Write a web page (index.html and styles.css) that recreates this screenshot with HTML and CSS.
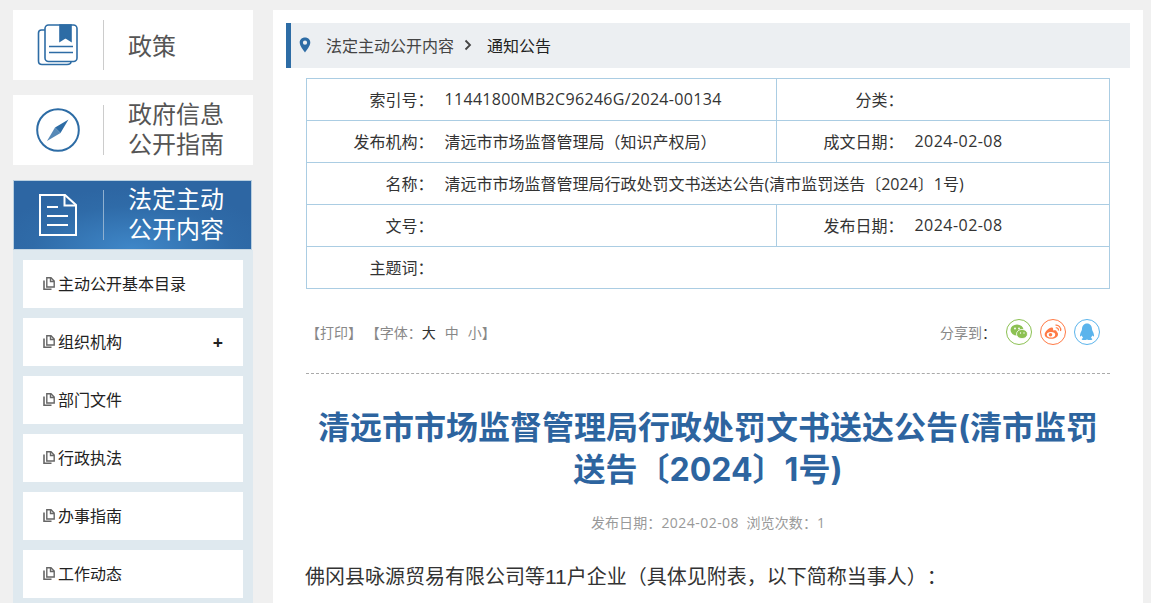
FILE: index.html
```html
<!DOCTYPE html>
<html lang="zh-CN">
<head>
<meta charset="utf-8">
<title>通知公告</title>
<link rel="stylesheet" href="styles.css">
</head>
<body>
<div class="page">
  <aside class="side">
    <a class="card">
      <span class="card-icon">
        <svg width="42" height="42" viewBox="0 0 42 42" fill="none" stroke="#2d6ca5" stroke-width="1.600"><path d="M8 6H4.500Q1.500 6 1.500 9V37Q1.500 40.500 5 40.500H30Q34 40.500 34 37.500"/><rect x="8" y="1" width="32" height="36.500" rx="3.500"/><path d="M23 1H34V17L28.500 13.500L23 17Z" fill="#2d6ca5"/><path d="M12 22.500H36M12 28.500H36" stroke-width="1.500"/></svg>
      </span>
      <span class="card-text one">政策</span>
    </a>
    <a class="card">
      <span class="card-icon">
        <svg width="44" height="44" viewBox="0 0 44 44" fill="none"><circle cx="22" cy="22" r="20.800" stroke="#2d6ca5" stroke-width="2"/><path d="M32.500 11.500L24.500 25L19 19.500Z" fill="#2d6ca5"/><path d="M11 33L19 19.500L24.500 25Z" fill="#2d6ca5" opacity=".8"/></svg>
      </span>
      <span class="card-text">政府信息<br>公开指南</span>
    </a>
    <a class="card active">
      <span class="card-icon">
        <svg class="active-doc" width="38" height="42" viewBox="0 0 38 42" fill="none" stroke="#fff" stroke-width="2"><path d="M1 1H26L37 11V41H1Z"/><path d="M25.500 1.500V11.500H37" stroke-width="2"/><path d="M8 13H19M8 22H29M8 31H29" stroke-width="2.200"/></svg>
      </span>
      <span class="card-text">法定主动<br>公开内容</span>
    </a>
    <nav class="menu">
      <a class="menu-item"><svg class="doc" viewBox="0 0 12 13" width="12" height="13"><use href="#doc"/></svg>主动公开基本目录</a>
      <a class="menu-item"><svg class="doc" viewBox="0 0 12 13" width="12" height="13"><use href="#doc"/></svg>组织机构<b class="plus">+</b></a>
      <a class="menu-item"><svg class="doc" viewBox="0 0 12 13" width="12" height="13"><use href="#doc"/></svg>部门文件</a>
      <a class="menu-item"><svg class="doc" viewBox="0 0 12 13" width="12" height="13"><use href="#doc"/></svg>行政执法</a>
      <a class="menu-item"><svg class="doc" viewBox="0 0 12 13" width="12" height="13"><use href="#doc"/></svg>办事指南</a>
      <a class="menu-item"><svg class="doc" viewBox="0 0 12 13" width="12" height="13"><use href="#doc"/></svg>工作动态</a>
    </nav>
  </aside>
  <main class="main">
    <div class="crumb">
      <svg class="pin" width="12" height="16" viewBox="0 0 12 16"><path fill="#2d6ca5" fill-rule="evenodd" d="M6 0.500C2.800 0.500 0.700 2.800 0.700 5.600C0.700 9 4.500 13.500 6 15.500C7.500 13.500 11.300 9 11.300 5.600C11.300 2.800 9.200 0.500 6 0.500ZM6 3.600A2.100 2.100 0 1 1 6 7.800A2.100 2.100 0 1 1 6 3.600Z"/></svg>
      <span class="crumb-a">法定主动公开内容</span>
      <svg class="chev" width="8" height="12" viewBox="0 0 8 12" fill="none" stroke="#444" stroke-width="1.800"><path d="M1.500 1.500L6 6L1.500 10.500"/></svg>
      <span class="crumb-b">通知公告</span>
    </div>
    <div class="body">
      <table class="meta">
        <colgroup><col class="c1"><col class="c2"><col class="c3"><col class="c4"></colgroup>
        <tr><th>索引号：</th><td><span class="id">11441800MB2C96246G/2024-00134</span></td><th>分类：</th><td></td></tr>
        <tr><th>发布机构：</th><td>清远市市场监督管理局（知识产权局）</td><th>成文日期：</th><td><span class="num">2024-02-08</span></td></tr>
        <tr><th>名称：</th><td colspan="3">清远市市场监督管理局行政处罚文书送达公告(清市监罚送告〔2024〕1号)</td></tr>
        <tr><th>文号：</th><td></td><th>发布日期：</th><td><span class="num">2024-02-08</span></td></tr>
        <tr><th>主题词：</th><td colspan="3"></td></tr>
      </table>
      <div class="tools">
        <div class="tools-left">【打印】 【字体：<span class="big">大</span><span class="sz">中</span><span class="sz">小</span>】</div>
        <div class="share">
          <span class="share-label">分享到<span class="colon">：</span></span>
          <span class="ring wx">
            <svg width="18" height="16" viewBox="0 0 18 16"><ellipse cx="7" cy="6" rx="6.500" ry="5.500" fill="#8cc152"/><ellipse cx="12" cy="10" rx="5.500" ry="4.600" fill="#8cc152" stroke="#fff" stroke-width=".8"/><circle cx="5" cy="4.500" r=".9" fill="#fff"/><circle cx="9" cy="4.500" r=".9" fill="#fff"/><circle cx="10.500" cy="9" r=".7" fill="#fff"/><circle cx="14" cy="9" r=".7" fill="#fff"/></svg>
          </span>
          <span class="ring wb">
            <svg width="18" height="16" viewBox="0 0 18 16" fill="none"><path d="M7.500 14.800C3.500 14.800 0.700 13 0.700 10.500C0.700 7.500 5 3.500 7.500 3.500C9.500 3.500 9.300 5.500 9 6.500C11 5.800 13 6.300 12.800 8C13.800 8.500 14 9.500 14 10.500C14 12.800 11 14.800 7.500 14.800Z" fill="#ff7a45"/><ellipse cx="7" cy="10.800" rx="4.200" ry="2.800" fill="#fff"/><circle cx="6.500" cy="10.800" r="1.800" fill="#ff7a45"/><path d="M11.500 1.200C14.500 0.800 17.500 3.500 16.500 7M11.800 3.800C13.500 3.500 14.800 4.800 14.300 6.500" stroke="#ff7a45" stroke-width="1.200"/></svg>
          </span>
          <span class="ring qq">
            <svg width="16" height="18" viewBox="0 0 16 18"><path fill="#5bb4ec" d="M8 0.500C4.800 0.500 3 3 3 6C3 7.500 2 8.500 1.500 10C0.800 12 0.800 13.500 1.500 13.500C2 13.500 2.500 12.800 2.800 12.300C3 13.500 3.500 14.300 4.200 15C3.200 15.300 2.500 15.800 2.800 16.500C3.300 17.300 6.500 17.300 8 16.500C9.500 17.300 12.700 17.300 13.200 16.500C13.500 15.800 12.800 15.300 11.800 15C12.500 14.300 13 13.500 13.200 12.300C13.500 12.800 14 13.500 14.500 13.500C15.200 13.500 15.200 12 14.500 10C14 8.500 13 7.500 13 6C13 3 11.200 0.500 8 0.500Z"/></svg>
          </span>
        </div>
      </div>
      <h1 class="title">清远市市场监督管理局行政处罚文书送达公告(清市监罚送告〔2024〕1号)</h1>
      <div class="info">发布日期：<span class="num">2024-02-08</span>&nbsp;&nbsp;浏览次数：1</div>
      <p class="para">佛冈县咏源贸易有限公司等<span class="pnum">11</span>户企业（具体见附表，以下简称当事人）：</p>
    </div>
  </main>
</div>
<svg class="defs" width="0" height="0"><defs><symbol id="doc" viewBox="0 0 12 13"><path d="M3.800 0.800H8L11.200 4V10H3.800Z M7.500 1V4.500H11" fill="none" stroke="#666" stroke-width="1.400"/><path d="M1 3.500V12.200H8.500" fill="none" stroke="#666" stroke-width="1.600"/></symbol></defs></svg>
</body>
</html>
```
FILE: styles.css
```css
* { box-sizing: border-box; }
html, body { margin: 0; height: 603px; overflow: hidden; }
body { background: #f0f0f0; font-family: "Open Sans", "Noto Sans CJK SC", sans-serif; color: #333; text-spacing-trim: space-all; }
.defs { position: absolute; }
.page { display: flex; align-items: flex-start; gap: 20px; padding: 10px 8px 0 13px; }
.side { width: 240px; flex: none; display: flex; flex-direction: column; }
.card { height: 70px; background: #fff; display: flex; align-items: center; margin-bottom: 15px; }
.card-icon { width: 91px; height: 50px; border-right: 1px solid #ccc; display: flex; align-items: center; justify-content: center; flex: none; }
.card-text { padding-left: 24px; padding-bottom: 2px; font-size: 24px; line-height: 30px; color: #555; }
.card-text.one { padding-bottom: 0; padding-top: 2px; }
.active-doc { margin-right: 2px; }
.card.active { background: radial-gradient(ellipse 60% 90% at 50% 100%, #3f87c8 0%, #2f6ba8 70%, #2d66a3 100%); border: 1px solid #b9cfe0; border-bottom-color: #c5d6e3; margin: 0; width: 239px; }
.card.active .card-icon { border-right-color: #8fb0d0; width: 90px; }
.card.active .card-text { color: #fff; }
.menu { background: #dfe9ef; padding: 10px 10px 20px; display: flex; flex-direction: column; gap: 10px; }
.menu-item { height: 48px; background: #fff; display: flex; align-items: center; padding-left: 20px; padding-bottom: 2px; font-size: 16px; color: #222; position: relative; }
.doc { margin-right: 3px; flex: none; margin-top: 1px; }
.plus { position: absolute; right: 20px; top: 11px; font-size: 18px; line-height: 26px; font-weight: 700; color: #222; }
.main { width: 870px; flex: none; height: 593px; background: #fff; padding: 13px 13px 0; }
.crumb { height: 45px; background: #eceff2; border-left: 5px solid #2d6ca5; display: flex; align-items: center; padding-left: 8px; padding-bottom: 2px; font-size: 16px; }
.pin { flex: none; margin-right: 15px; margin-top: 1px; }
.crumb-a { color: #444; }
.chev { margin: 0 15px 0 10px; flex: none; margin-top: 1px; }
.crumb-b { color: #222; }
.body { padding: 10px 20px 0; }
.meta { width: 804px; border-collapse: collapse; table-layout: fixed; font-size: 16px; color: #333; }
.c1 { width: 128px; }
.c2 { width: 342px; }
.c3 { width: 128px; }
.meta th, .meta td { height: 42px; border-top: 1px solid #abcde3; border-bottom: 1px solid #abcde3; padding: 0 0 2px; font-weight: 400; text-align: left; white-space: nowrap; }
.meta th { text-align: right; padding-right: 1px; border-left: 1px solid #abcde3; }
.meta td { padding-left: 10px; }
.meta td:last-child { border-right: 1px solid #abcde3; }
.num { letter-spacing: .46px; }
.id { letter-spacing: .32px; }
.tools { height: 85px; display: flex; justify-content: space-between; align-items: flex-start; border-bottom: 1px dashed #aaa; padding-top: 28px; }
.tools-left { font-size: 14px; color: #888; line-height: 32px; }
.big { color: #333; margin-right: 9px; }
.sz { margin-right: 9px; }
.sz + .sz { margin-right: 0; }
.share { display: flex; align-items: center; padding-right: 10px; padding-top: 2px; }
.share-label { font-size: 14px; color: #888; margin-right: 2px; }
.colon { color: #333; }
.ring { width: 26px; height: 26px; border-radius: 50%; display: flex; align-items: center; justify-content: center; margin-left: 8px; border: 1px solid; background: #fff; }
.wx { border-color: #8cc152; }
.wb { border-color: #ff7a45; }
.qq { border-color: #5bb4ec; }
.title { margin: 33px 0 0; font-family: Inter, "Noto Sans CJK SC", sans-serif; font-size: 32px; line-height: 42px; font-weight: 700; color: #2d649f; text-align: center; }
.info { margin-top: 22px; font-size: 14px; line-height: 20px; color: #999; text-align: center; letter-spacing: .1px; }
.para { margin: 28px 0 0 -1px; font-size: 20px; line-height: 32px; color: #333; }
.pnum { font-family: "Liberation Sans", sans-serif; font-size: 21px; }
```
